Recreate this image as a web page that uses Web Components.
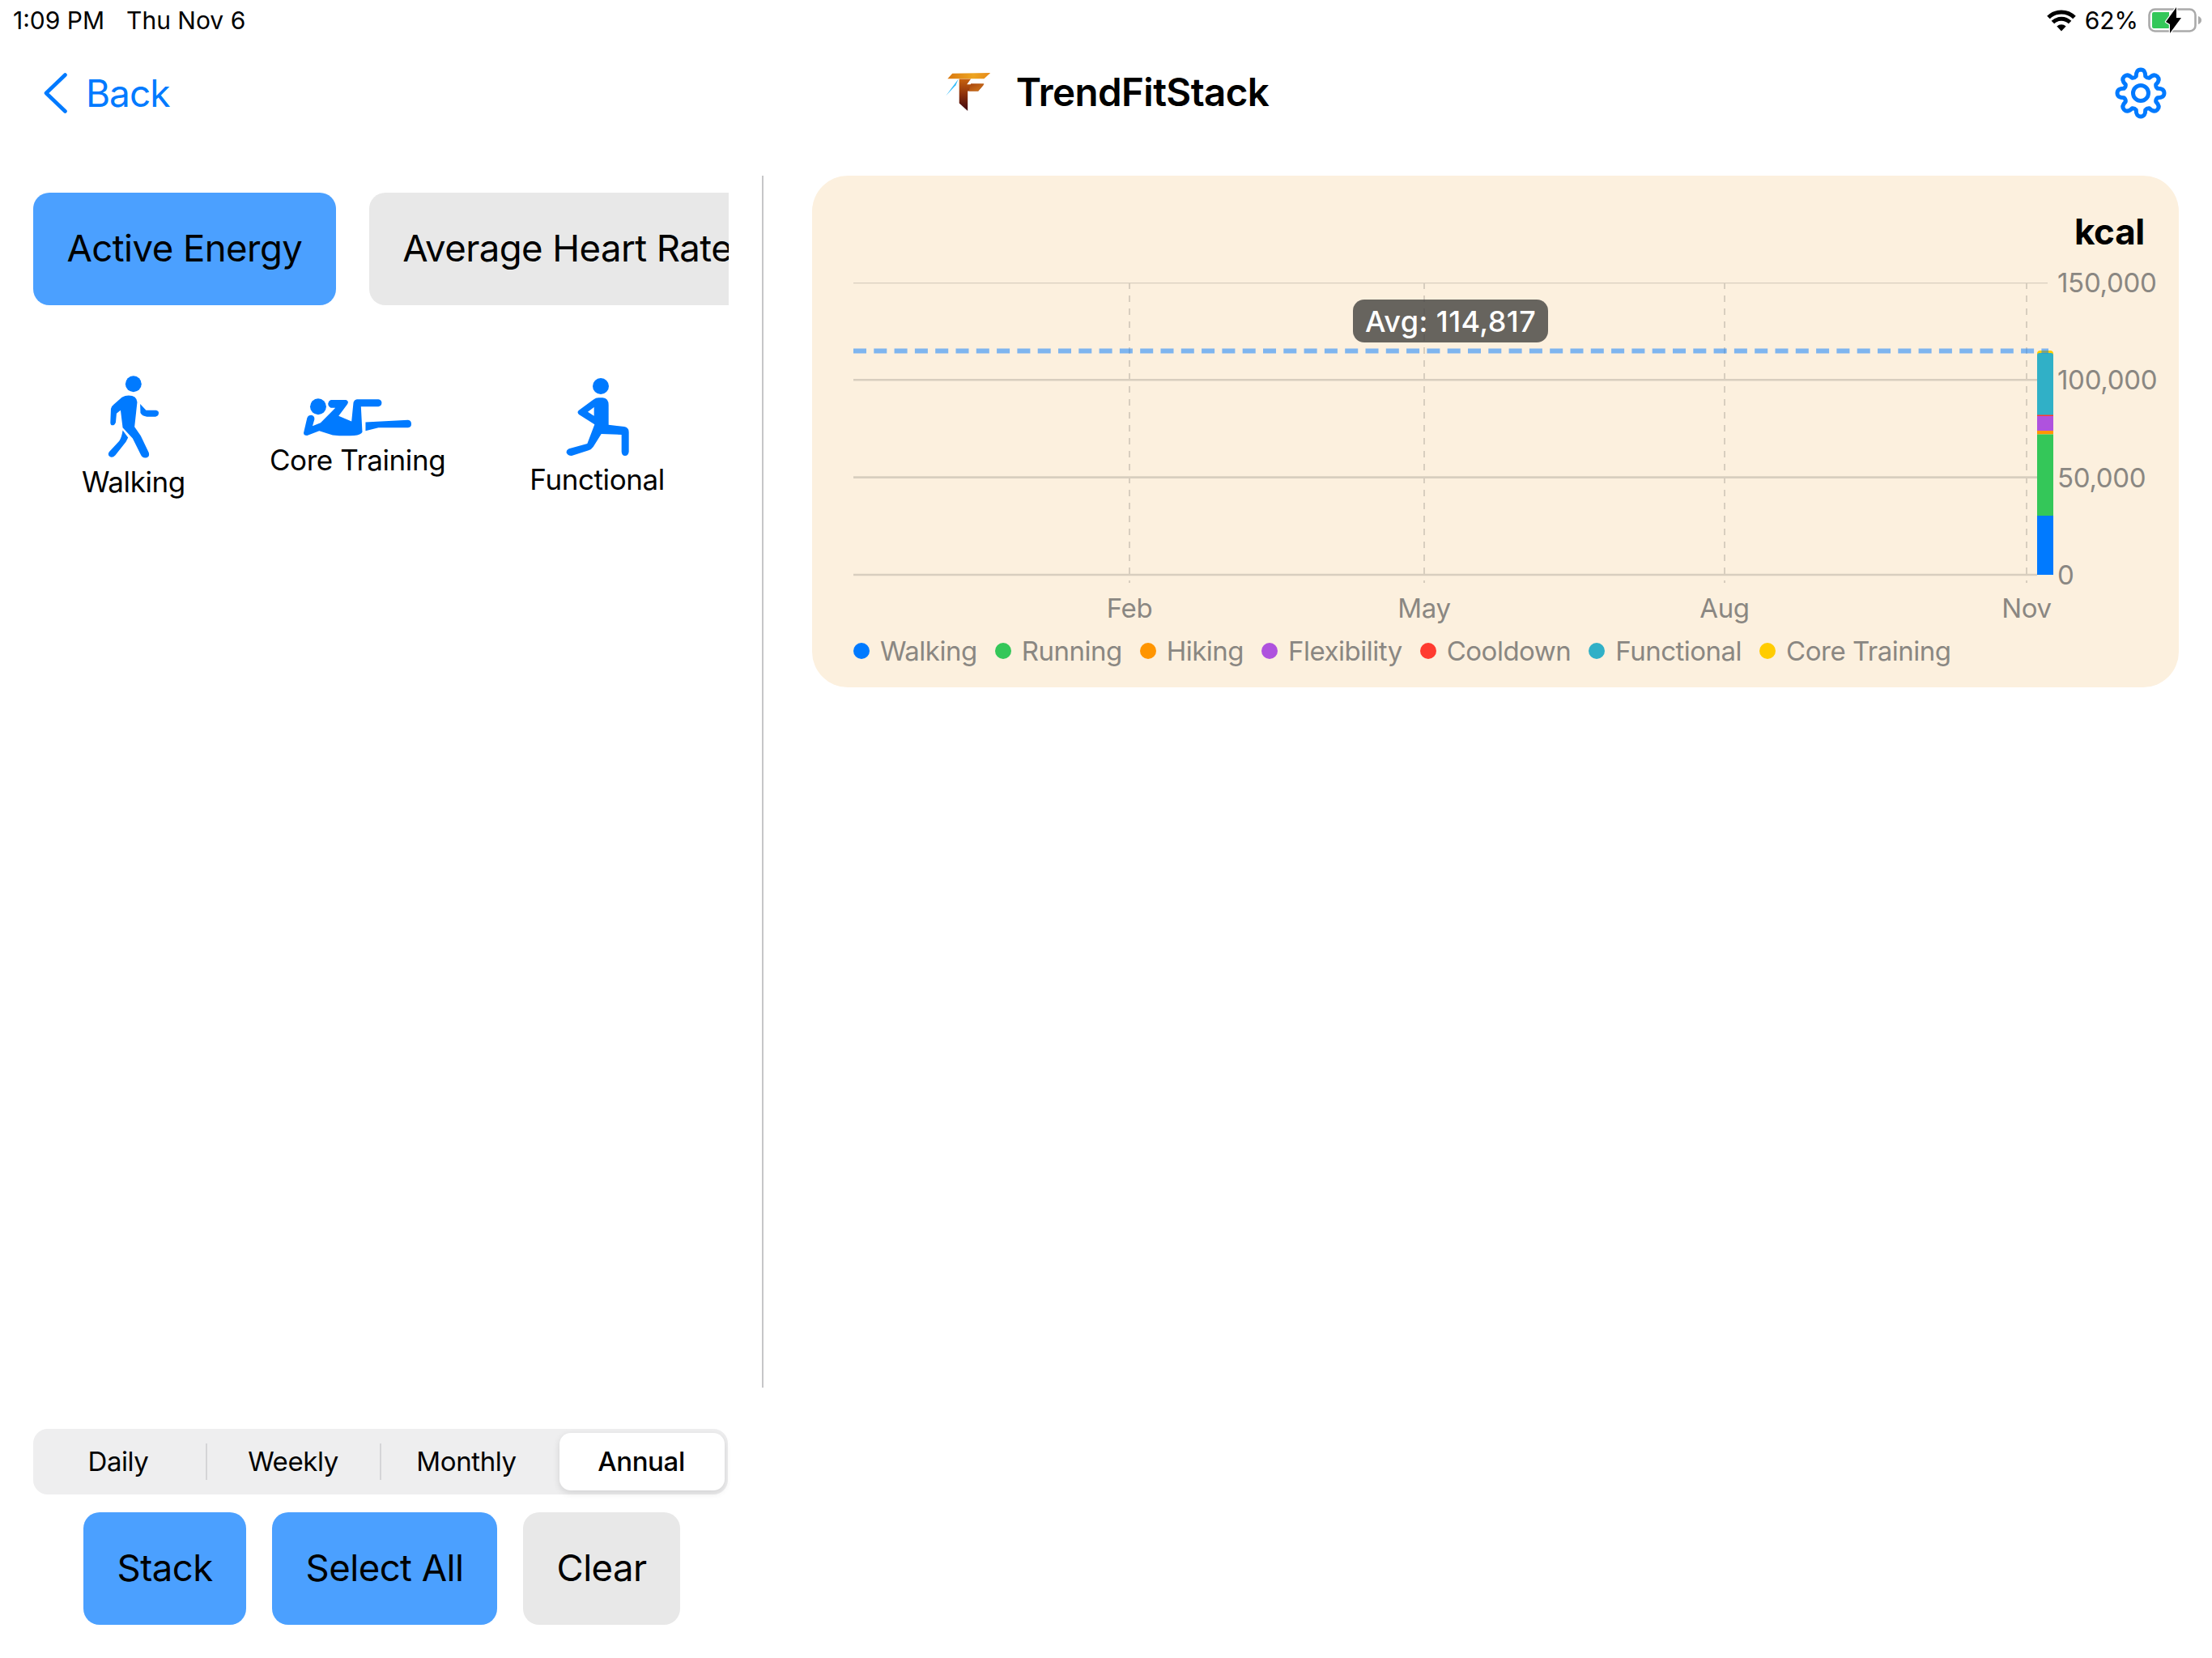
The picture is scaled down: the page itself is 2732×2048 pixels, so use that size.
<!DOCTYPE html>
<html lang="en">
<head>
<meta charset="utf-8">
<title>TrendFitStack</title>
<style>
html,body{margin:0;padding:0;background:#fff;width:2732px;height:2048px;overflow:hidden;font-family:Inter,"Liberation Sans",sans-serif;color:#000}
</style>
</head>
<body>
<fit-app></fit-app>
<script>
function def(name, css, html, extra){
  const t=document.createElement('template');
  t.innerHTML='<style>'+css+'</style>'+html;
  class E extends HTMLElement{
    constructor(){super();this.attachShadow({mode:'open'}).appendChild(t.content.cloneNode(true));}
    connectedCallback(){ if(extra) extra.call(this,this.shadowRoot); }
  }
  customElements.define(name,E);
}

def('status-bar',`
:host{display:flex;height:50px;align-items:center;justify-content:space-between;font-size:30px;padding:0 12px 0 16px;box-sizing:border-box}
.l{display:flex;gap:27px}.r{display:flex;align-items:center}
.pct{margin:0 12px 0 10px}svg{display:block}
`,`
<div class="l"><span>1:09 PM</span><span>Thu Nov 6</span></div>
<div class="r">
<svg width="38" height="28" viewBox="0 0 38 28"><path d="M19 27.5 13.4 21.6A8 8 0 0 1 24.6 21.6Z" fill="#000"/><path d="M8.4 16.6A15 15 0 0 1 29.6 16.6" fill="none" stroke="#000" stroke-width="5"/><path d="M3 10.6A22.5 22.5 0 0 1 35 10.6" fill="none" stroke="#000" stroke-width="5"/></svg>
<span class="pct">62%</span>
<svg width="67" height="34" viewBox="0 0 67 34"><rect x="1.5" y="3.5" width="57" height="27" rx="7" fill="none" stroke="#aaa" stroke-width="2.6"/><path d="M62 12c2.500 .8 4 2.600 4 5s-1.500 4.200-4 5z" fill="#aaa"/><path d="M5 9a2 2 0 0 1 2-2H26V27H7a2 2 0 0 1-2-2z" fill="#34c759"/><path d="M22 19 35 1V14H41L27 33V22Z" fill="#000" stroke="#fff" stroke-width="2.400" paint-order="stroke" stroke-linejoin="round"/></svg>
</div>`);

def('nav-bar',`
:host{display:grid;grid-template-columns:1fr auto 1fr;align-items:center;height:130px;padding:0 56px 0 54px;box-sizing:border-box}
.back{display:flex;align-items:center;gap:23px;color:#007aff;font-size:46px;letter-spacing:-1px}
.title{display:flex;align-items:center;gap:31px;font-size:47.5px;font-weight:600;letter-spacing:-.6px;margin:-3px 0 0 4px}
.gear{justify-self:end}svg{display:block}
`,`
<div class="back"><svg width="29" height="50" viewBox="0 0 29 50"><path d="M26.500 2.500 3 25 26.500 47.500" fill="none" stroke="#007aff" stroke-width="4.600" stroke-linecap="round" stroke-linejoin="round"/></svg><span>Back</span></div>
<div class="title">
<svg width="57" height="49" viewBox="115 90 172 150"><defs>
<linearGradient id="a" x1="0" y1="0" x2="1" y2="0"><stop offset="0" stop-color="#d9780f"/><stop offset=".6" stop-color="#eda420"/><stop offset="1" stop-color="#e68a1a"/></linearGradient>
<linearGradient id="b" x1="0" y1="0" x2="0" y2="1"><stop offset="0" stop-color="#c8620e"/><stop offset=".5" stop-color="#8a2f0c"/><stop offset="1" stop-color="#3c0710"/></linearGradient>
<linearGradient id="c" x1="0" y1="0" x2="1" y2="1"><stop offset="0" stop-color="#a8450d"/><stop offset="1" stop-color="#d27a1c"/></linearGradient></defs>
<path d="M124 115 142 95 286 93 262 115Z" fill="url(#a)"/>
<path d="M168 116H212L197 137H262L240 162H200V237L168 208Z" fill="url(#b)"/>
<path d="M212 134H262L240 162H205Z" fill="url(#c)"/>
<path d="M117 180 165 116 155 140Z" fill="#38bdf8"/></svg>
<span>TrendFitStack</span></div>
<div class="gear"><svg id="g" width="64" height="64" viewBox="-32 -32 64 64" fill="none" stroke="#007aff" stroke-width="5" stroke-linejoin="round"><path id="gp"/><circle r="9.500"/></svg></div>`,
function(s){
  let d='';const R=29,r=21.5,n=8;
  for(let i=0;i<n;i++){
    const a=-Math.PI/2+i*2*Math.PI/n,w=.2,q=.27;
    const P=(rad,ang)=>(rad*Math.cos(ang)).toFixed(2)+' '+(rad*Math.sin(ang)).toFixed(2);
    d+=(i?'L':'M')+P(r,a-q)+'Q'+P(R+.5,a-w)+' '+P(R,a)+'Q'+P(R+.5,a+w)+' '+P(r,a+q);
    d+='Q'+P(r-1.600,a+Math.PI/n)+' '+P(r,a+2*Math.PI/n-q);
  }
  s.getElementById('gp').setAttribute('d',d+'Z');
});

def('pill-button',`
:host{display:flex;flex:none;align-items:center;justify-content:center;box-sizing:border-box;height:139px;padding:0 41.5px 3px;border-radius:20px;background:#e8e8e8;font-size:45.5px;letter-spacing:-.55px;white-space:nowrap}
:host([on]){background:#4ba0ff}
`,`<slot></slot>`);

def('metric-tabs',`
:host{display:flex;gap:41px;width:859px;margin-left:41px;overflow:hidden}
`,`<slot></slot>`);

def('workout-item',`
:host{display:flex;flex-direction:column;align-items:center;gap:8px;flex:none}
.label{font-size:35px;line-height:42px;letter-spacing:-.4px}
::slotted(svg){display:block}
`,`<slot></slot><div class="label" id="l"></div>`,function(s){s.getElementById('l').textContent=this.getAttribute('label');});

def('workout-grid',`
:host{display:flex;align-items:center;gap:104px;height:152px;margin-top:87px;padding-left:101px}
`,`<slot></slot>`);

def('side-panel',`
:host{display:block;box-sizing:border-box;width:943px;height:1497px;padding-top:21px;border-right:2px solid #c6c6c8}
`,`<slot></slot>`);

def('legend-item',`
:host{display:flex;align-items:center;gap:13px;font-size:33px;letter-spacing:-.5px;color:#8a8782}
i{width:20px;height:20px;border-radius:50%;background:var(--c)}
`,`<i></i><slot></slot>`);

def('chart-card',`
:host{display:block;box-sizing:border-box;width:1688px;height:632px;margin-left:60px;padding:43px 42px 0 51px;background:#fcf0de;border-radius:44px}
.unit{font-size:44px;font-weight:700;line-height:52px;text-align:right;letter-spacing:-.3px}
.plotrow{display:flex;margin-top:37px}
.plot{position:relative;width:1482px;height:371px;flex:none}
svg{display:block}
.y{margin:-20px 0 0 5px;height:401px;display:flex;flex-direction:column;justify-content:space-between;font-size:33px;letter-spacing:-.3px;color:#8a8782}
.y span{height:40px;line-height:40px}
.tip{position:absolute;left:617px;top:21px;width:241px;height:53px;box-sizing:border-box;display:flex;align-items:center;justify-content:center;background:rgba(70,68,66,.82);color:#fff;border-radius:14px;font-size:36px;letter-spacing:.4px;font-weight:500}
.x{position:relative;height:54px;width:1482px;font-size:33px;letter-spacing:-.3px;color:#8a8782}
.x span{position:absolute;top:1px;line-height:40px;transform:translateX(-50%)}
.legend{display:flex;gap:22px;height:40px;align-items:center}
`,`
<div class="unit">kcal</div>
<div class="plotrow">
<div class="plot">
<svg width="1482" height="371" viewBox="0 0 1482 371">
<g stroke="#d8cebf" stroke-width="2.600"><path d="M0 0H1475M0 120.300H1462M0 240.600H1462M0 361H1462"/></g>
<g stroke="#d8cebf" stroke-width="2" stroke-dasharray="8 8"><path d="M341 0V371M705 0V371M1076 0V371M1449 0V371"/></g>
<rect x="1462" y="84" width="20" height="12" rx="4" fill="#ffcc00"/>
<rect x="1462" y="87" width="20" height="80" rx="3" fill="#30b0c7"/>
<rect x="1462" y="163.500" width="20" height="2" fill="#ff3b30"/>
<rect x="1462" y="165" width="20" height="18" fill="#af52de"/>
<rect x="1462" y="183" width="20" height="4.500" fill="#ff9500"/>
<rect x="1462" y="187.500" width="20" height="100.500" fill="#34c759"/>
<rect x="1462" y="288" width="20" height="73" fill="#007aff"/>
<path d="M0 84.600H1476" stroke="#007aff" stroke-opacity=".5" stroke-width="6" stroke-dasharray="16 9.300"/>
</svg>
<div class="tip">Avg: 114,817</div>
</div>
<div class="y"><span>150,000</span><span>100,000</span><span>50,000</span><span>0</span></div>
</div>
<div class="x"><span style="left:341px">Feb</span><span style="left:705px">May</span><span style="left:1076px">Aug</span><span style="left:1449px">Nov</span></div>
<div class="legend"><slot></slot></div>
`);

def('seg-control',`
:host{display:flex;align-items:center;box-sizing:border-box;width:858px;height:81px;margin-left:41px;background:#eeeeef;border-radius:18px;padding:0 4px 0 0;font-size:33px;letter-spacing:-.4px}
span{display:flex;align-items:center;justify-content:center;height:71px;flex:none;position:relative;box-sizing:border-box;padding-bottom:1px}
.d{width:215px;padding-right:5px}.w{width:215px;padding-right:3px}.m{width:220px;padding-right:10px}
.d::after,.w::after{content:"";position:absolute;right:0;top:13px;bottom:13px;width:2px;background:#d5d5d7}
.a{width:204px;background:#fff;border-radius:14px;font-weight:500;box-shadow:0 3px 8px rgba(0,0,0,.12);padding-right:2px}
`,`<span class="d">Daily</span><span class="w">Weekly</span><span class="m">Monthly</span><span class="a">Annual</span>`);

def('action-row',`
:host{display:flex;gap:32px;margin:22px 0 0 103px}
`,`<slot></slot>`);

def('fit-app',`
:host{display:block;width:2732px;height:2048px;font-family:Inter,"Liberation Sans",sans-serif}
.main{display:flex;align-items:flex-start;margin-top:37px}
.bottom{margin-top:51px}
workout-item svg{fill:#007aff;fill-rule:evenodd}
`,`
<status-bar></status-bar>
<nav-bar></nav-bar>
<div class="main">
<side-panel>
<metric-tabs><pill-button on>Active Energy</pill-button><pill-button>Average Heart Rate</pill-button></metric-tabs>
<workout-grid>
<workout-item label="Walking"><svg width="63" height="102" viewBox="222 72 190 306"><circle cx="318" cy="102" r="30"/><path d="M300 145Q330 145 332 170L322 262 345 295 375 358Q380 376 362 377 350 377 345 365L315 305 278 265 270 200 255 212 252 245Q248 256 240 256 232 256 232 245L234 195Q235 185 245 178L275 152Q287 145 300 145Z"/><path d="M343 177 365 200H402Q412 202 412 210 412 222 400 224H368Q350 222 344 210Z"/><path d="M278 275 298 302 290 318 250 368Q240 378 230 373 220 365 228 355L265 315Q275 300 278 275Z"/></svg></workout-item>
<workout-item label="Core Training"><svg width="133" height="47" viewBox="942 160 400 140"><circle cx="996" cy="190" r="30"/><path d="M1043 165H1100Q1112 170 1104 182L1072 225 1120 245 1127 175Q1130 165 1140 163H1220Q1232 165 1232 176 1232 188 1220 190H1155L1160 285Q1155 295 1130 298 1085 300 1050 296L1000 280 955 298Q942 298 942 288L955 232Q960 222 970 222 984 225 982 238L975 262 1005 250 1060 195H1043Q1032 188 1033 178 1035 168 1043 165Z"/><path d="M1172 248 1330 240Q1342 242 1342 255 1342 268 1330 268H1220L1172 280Z"/></svg></workout-item>
<workout-item label="Functional"><svg width="78" height="96" viewBox="295 85 232 288"><circle cx="423" cy="115" r="30"/><path d="M415 158H430Q452 160 452 185V258L510 265Q527 268 527 285V358Q525 373 513 373 501 373 500 358V295L425 292 395 340Q388 350 378 353L315 373Q300 373 296 362 294 352 305 347L373 328 397 265 400 257 342 220Q333 212 342 204L395 165Q405 158 415 158ZM398 193 375 210 398 225Z"/></svg></workout-item>
</workout-grid>
</side-panel>
<chart-card>
<legend-item style="--c:#007aff">Walking</legend-item>
<legend-item style="--c:#34c759">Running</legend-item>
<legend-item style="--c:#ff9500">Hiking</legend-item>
<legend-item style="--c:#af52de">Flexibility</legend-item>
<legend-item style="--c:#ff3b30">Cooldown</legend-item>
<legend-item style="--c:#30b0c7">Functional</legend-item>
<legend-item style="--c:#ffcc00">Core Training</legend-item>
</chart-card>
</div>
<div class="bottom">
<seg-control></seg-control>
<action-row><pill-button on>Stack</pill-button><pill-button on>Select All</pill-button><pill-button>Clear</pill-button></action-row>
</div>`);
</script>
</body>
</html>
